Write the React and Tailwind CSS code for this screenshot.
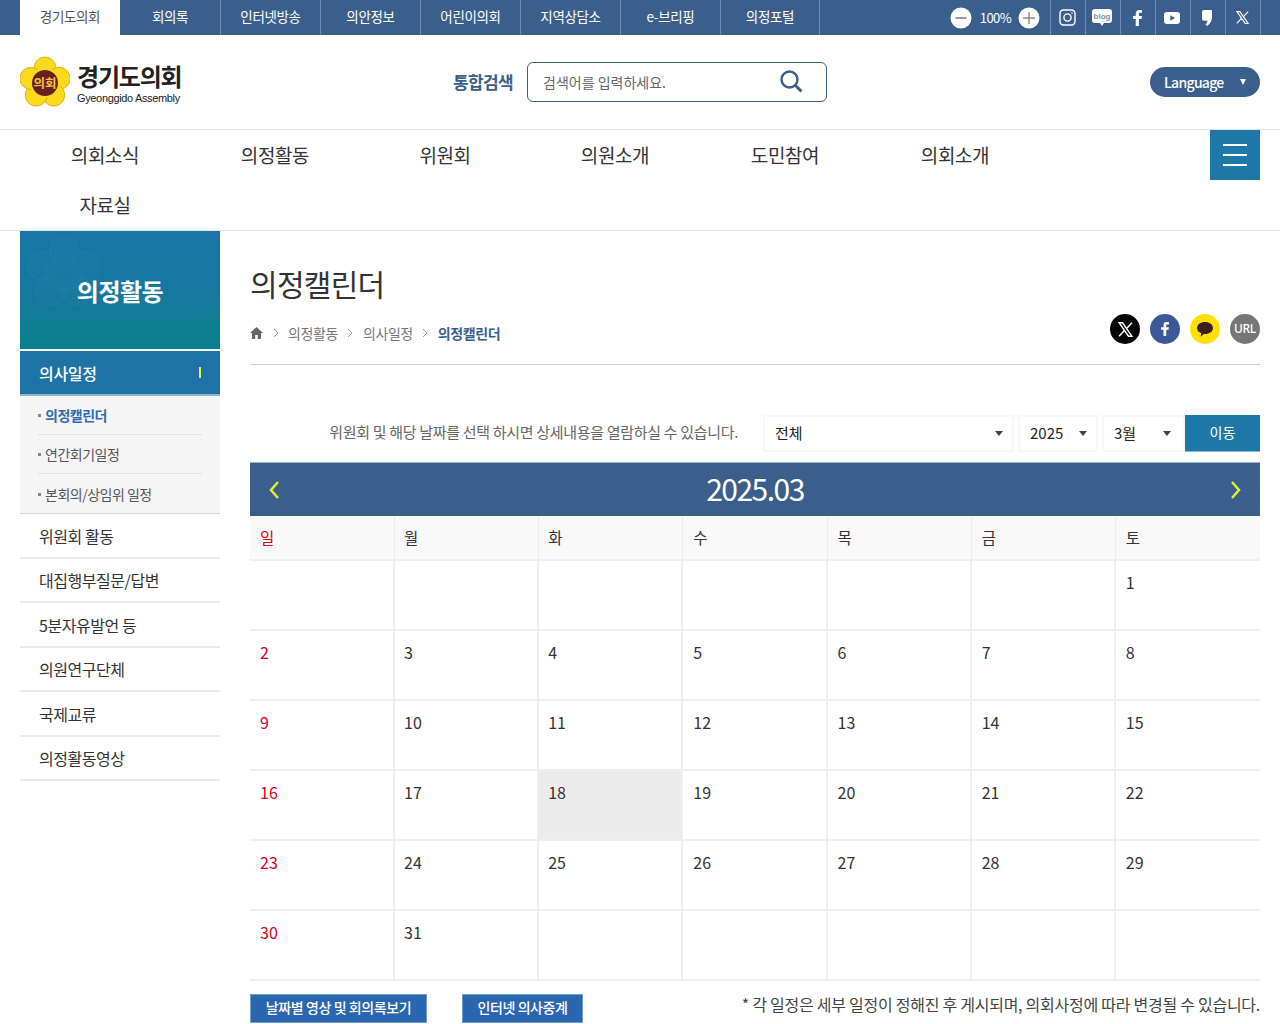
import React from "react";

const F = { fontFamily: '"Noto Sans CJK KR", "Noto Sans", sans-serif' };
const tabs = ["경기도의회","회의록","인터넷방송","의안정보","어린이의회","지역상담소","e-브리핑","의정포털"];
const nav = ["의회소식","의정활동","위원회","의원소개","도민참여","의회소개","자료실"];
const side = ["위원회 활동","대집행부질문/답변","5분자유발언 등","의원연구단체","국제교류","의정활동영상"];
const days = ["일","월","화","수","목","금","토"];
const cells = [null,null,null,null,null,null,1,...Array.from({length:30},(_,i)=>i+2),null,null,null,null,null];

function Flower({ className }) {
  const petals = [0,72,144,216,288];
  return (
    <svg viewBox="0 0 50 52" className={className}>
      {petals.map(a => <ellipse key={a} cx="25" cy="12" rx="11" ry="11" fill="#fbd91c" stroke="#d8a915" strokeWidth="0.8" transform={`rotate(${a} 25 27)`} />)}
      <circle cx="25" cy="27" r="15" fill="#fbd91c" />
      <circle cx="25" cy="27" r="13" fill="#6b1f1f" />
      <text x="25" y="32" textAnchor="middle" fontSize="12.5" fontWeight="700" fill="#f5c542" style={F}>의회</text>
    </svg>
  );
}

function TopIcon({ children }) {
  return <div className="w-[35px] h-[35px] flex items-center justify-center pr-[2px] border-r border-[#6d8cb3] text-white">{children}</div>;
}

function Select({ w, label, pr }) {
  return (
    <div className={`${w} ${pr} h-[37px] border-2 border-[#f7f7f7] flex items-center justify-between pl-[10px] text-[15px] text-[#222]`}>
      <span>{label}</span>
      <svg width="8" height="5" viewBox="0 0 8 5"><path d="M0 0h8L4 5z" fill="#444" /></svg>
    </div>
  );
}

export default function App() {
  return (
    <div className="w-[1280px] h-[1024px] overflow-hidden bg-white text-[#333]" style={F}>
      {/* top bar */}
      <div className="h-[35px] bg-[#3b5f8c] flex pl-[20px] pr-[19px] items-stretch">
        {tabs.map((t,i) => (
          <div key={t} className={`w-[100px] flex items-center justify-center text-[13.5px] tracking-[-0.35px] pb-[2px] ${i===0 ? "bg-white text-[#555]" : "text-white"} ${i>1 ? "border-l border-[#6d8cb3]" : ""} ${i===7 ? "border-r border-[#6d8cb3]" : ""}`}>{t}</div>
        ))}
        <div className="ml-auto flex items-center">
          <svg width="22" height="22" viewBox="0 0 22 22"><circle cx="11" cy="11" r="10.500" fill="#fff"/><path d="M5.500 11h11" stroke="#999" strokeWidth="2"/></svg>
          <span className="text-white text-[13px] tracking-[-0.6px] ml-[8px] mr-[7px]">100%</span>
          <svg width="22" height="22" viewBox="0 0 22 22" className="mr-[10px]"><circle cx="11" cy="11" r="10.500" fill="#fff"/><path d="M5 11h12M11 5v12" stroke="#888" strokeWidth="1.4"/></svg>
          <div className="w-px h-[35px] bg-[#6d8cb3]" />
          <TopIcon><svg width="17" height="17" viewBox="0 0 17 17" fill="none" stroke="#fff" strokeWidth="1.4"><rect x="1" y="1" width="15" height="15" rx="3.500"/><circle cx="8.500" cy="8.500" r="3.600"/><circle cx="13" cy="4" r="0.800" fill="#fff" stroke="none"/></svg></TopIcon>
          <TopIcon>
            <svg width="20" height="18" viewBox="0 0 20 18"><path d="M3 0h14a3 3 0 0 1 3 3v8a3 3 0 0 1-3 3h-5l-2 3-2-3H3a3 3 0 0 1-3-3V3a3 3 0 0 1 3-3z" fill="#fff"/><text x="10" y="9.800" textAnchor="middle" fontSize="8" fontWeight="700" fill="#7d8fa8" style={{fontFamily:'"Liberation Sans",sans-serif'}}>blog</text></svg>
          </TopIcon>
          <TopIcon><svg width="9" height="16" viewBox="0 0 10 18"><path d="M3 18V10H0V6.800h3V4.500C3 1.500 4.600 0 7.200 0H10v3.200H8c-1 0-1.400.5-1.400 1.400v2.200H10L9.500 10H6.600v8z" fill="#fff"/></svg></TopIcon>
          <TopIcon><svg width="16" height="12" viewBox="0 0 16 12"><rect width="16" height="12" rx="3" fill="#fff"/><path d="M6.300 3.300v5.400L11 6z" fill="#3b5f8c"/></svg></TopIcon>
          <TopIcon><svg width="10" height="16" viewBox="0 0 10 16"><path d="M2 0h7a1 1 0 0 1 1 1v6c0 4-2 7-5 9l-1.500-1.500c1.200-1.200 1.800-2.400 2-3.800H2.500A2.500 2.500 0 0 1 0 8.200V2a2 2 0 0 1 2-2z" fill="#fff"/></svg></TopIcon>
          <TopIcon><svg width="15" height="15" viewBox="0 0 24 24" fill="none" stroke="#fff" strokeWidth="1.800"><path d="M3 2.500h4.800L21 21.500h-4.800zM21 2.500l-8 8.800M3 21.500l8-8.800"/></svg></TopIcon>
        </div>
      </div>

      {/* header */}
      <div className="h-[95px] border-b border-[#e4e4e4] pl-[20px] pr-[20px] flex items-center">
        <div className="w-[433px] flex items-center shrink-0">
          <Flower className="w-[50px] h-[52px]" />
          <div className="ml-[7px] text-[#222] pt-[2px]">
            <div className="text-[24px] leading-[30px] font-bold tracking-[-1.2px]">경기도의회</div>
            <div className="text-[11px] leading-[13px] tracking-[-0.35px] mt-[1px]" style={{fontFamily:'"Liberation Sans",sans-serif'}}>Gyeonggido Assembly</div>
          </div>
        </div>
        <div className="text-[17px] font-bold text-[#3b5f8c] tracking-[-0.6px] w-[74px] shrink-0">통합검색</div>
        <div className="w-[300px] h-[40px] border border-[#3b5f8c] rounded-[6px] flex items-center justify-between pl-[15px] pr-[22px] -mt-[1px] shrink-0">
          <span className="text-[14px] text-[#666] pt-[2px]">검색어를 입력하세요.</span>
          <svg width="25" height="25" viewBox="0 0 25 25" fill="none" stroke="#3b5f8c"><circle cx="10.500" cy="10.500" r="8" strokeWidth="2.400"/><path d="M16.500 16.500l6 6" strokeWidth="3"/></svg>
        </div>
        <div className="ml-auto w-[110px] h-[30px] rounded-[15px] bg-[#3b5f8c] flex items-center pl-[14px] pr-[14px] justify-between text-white -mt-[1px]">
          <span className="text-[14px] font-medium tracking-[-0.7px] pt-[1px]">Language</span>
          <svg width="6" height="6" viewBox="0 0 7 7"><path d="M0 0h7L3.500 7z" fill="#fff"/></svg>
        </div>
      </div>

      {/* nav */}
      <div className="h-[101px] border-b border-[#e8e8e8] pl-[20px] pr-[20px] flex justify-between items-start">
        <div className="w-[1020px] flex flex-wrap">
          {nav.map((n,i) => <div key={i} className="w-[170px] h-[50px] flex items-center justify-center text-[19px] text-[#333] tracking-[-0.4px]">{n}</div>)}
        </div>
        <div className="w-[50px] h-[50px] bg-[#1d78a8] flex flex-col items-center justify-center gap-[8px]">
          <div className="w-[24px] h-[2px] bg-white" />
          <div className="w-[24px] h-[2px] bg-white" />
          <div className="w-[24px] h-[2px] bg-white" />
        </div>
      </div>

      <div className="flex pl-[20px] pr-[20px]">
        {/* sidebar */}
        <div className="w-[200px] shrink-0">
          <div className="relative h-[118px] flex items-center justify-center bg-gradient-to-b from-[#1a76a5] via-[#17789f] to-[#07818a] overflow-hidden">
            <svg viewBox="0 0 74 74" className="absolute left-[7px] top-[4px] w-[74px] h-[74px] opacity-[0.04]" fill="#fff" fillOpacity="0.35" stroke="#fff" strokeWidth="1">
              {[0,72,144,216,288].map(a => <circle key={a} cx="37" cy="15" r="14" transform={`rotate(${a} 37 38)`} />)}
              <circle cx="37" cy="38" r="18"/>
            </svg>
            <div className="relative text-white text-[24px] font-bold tracking-[-0.5px] pt-[1px]">의정활동</div>
          </div>
          <div className="mt-[2px] h-[45px] bg-[#1d73a6] border-b-[2px] border-[#8fb7cf] flex items-center justify-between pl-[19px] pr-[19px] text-white">
            <span className="text-[16px] font-medium tracking-[-0.3px]">의사일정</span>
            <div className="w-[2px] h-[11px] bg-[#f0ee3a]" />
          </div>
          <div className="bg-[#f5f5f6] border-b border-[#d8d8d8] h-[118px] pl-[18px] pr-[18px]">
            {[["의정캘린더",true],["연간회기일정",false],["본회의/상임위 일정",false]].map(([t,a],i) => (
              <div key={t} className={`h-[39px] flex items-center text-[14px] tracking-[-0.5px] ${i<2 ? "border-b border-[#e2e2e2]" : "pt-[1px]"} ${a ? "text-[#2f6bb2] font-bold" : "text-[#555]"}`}>
                <span className="w-[3px] h-[3px] bg-[#888] mr-[4px]" />{t}
              </div>
            ))}
          </div>
          {side.map(s => (
            <div key={s} className="h-[44.5px] border-b-[2px] border-[#eaeaea] flex items-center pl-[19px] pt-[1px] text-[16px] text-[#333] tracking-[-0.45px]">{s}</div>
          ))}
        </div>

        {/* main */}
        <div className="ml-[30px] flex-1 min-w-0">
          <h1 className="text-[30px] leading-[40px] mt-[32px] text-[#333] tracking-[-0.7px]">의정캘린더</h1>
          <div className="h-[62px] border-b border-[#cfcfcf] flex justify-between">
            <div className="flex items-center h-[52px] pt-[8px] text-[14px] text-[#777] tracking-[-0.4px]">
              <svg width="13" height="12" viewBox="0 0 13 12"><path d="M6.500 0L0 6h2v6h3.200V8h2.600v4H11V6h2z" fill="#666"/></svg>
              <Sep />
              <span>의정활동</span><Sep />
              <span>의사일정</span><Sep />
              <span className="text-[#3b5f8c] font-bold">의정캘린더</span>
            </div>
            <div className="flex gap-[10px] h-[52px] items-center">
              <Circle c="bg-black"><svg width="17" height="17" viewBox="0 0 24 24" fill="none" stroke="#fff" strokeWidth="2"><path d="M3 2.500h4.800L21 21.500h-4.800zM21 2.500l-8 8.800M3 21.500l8-8.800"/></svg></Circle>
              <Circle c="bg-[#3b5998]"><svg width="8" height="14" viewBox="0 0 10 18"><path d="M3 18V10H0V6.800h3V4.500C3 1.500 4.600 0 7.200 0H10v3.200H8c-1 0-1.400.5-1.400 1.400v2.200H10L9.500 10H6.600v8z" fill="#fff"/></svg></Circle>
              <Circle c="bg-[#ffe000]"><svg width="16" height="15" viewBox="0 0 16 15"><path d="M8 0c4.400 0 8 2.600 8 6s-3.600 6-8 6h-1L3.500 14.800l.7-3.500C1.700 10.300 0 8.300 0 6c0-3.400 3.600-6 8-6z" fill="#3c1e1e"/></svg></Circle>
              <Circle c="bg-[#767676]"><span className="text-white text-[12px] font-medium tracking-[-0.3px]" style={{fontFamily:'"Noto Sans",sans-serif'}}>URL</span></Circle>
            </div>
          </div>

          {/* filter */}
          <div className="mt-[50px] flex items-center h-[37px]">
            <div className="ml-auto text-[15px] text-[#666] tracking-[-0.32px] mr-[25px] pb-[3px]">위원회 및 해당 날짜를 선택 하시면 상세내용을 열람하실 수 있습니다.</div>
            <Select w="w-[251px]" pr="pr-[9px]" label="전체" />
            <div className="w-[4px]" />
            <Select w="w-[80px]" pr="pr-[9px]" label="2025" />
            <div className="w-[4px]" />
            <Select w="w-[83px]" pr="pr-[12px]" label="3월" />
            <div className="w-[75px] h-[37px] bg-[#1d78a8] text-white text-[14px] flex items-center justify-center border-b border-[#8fb7cf] pb-[2px]">이동</div>
          </div>

          {/* calendar head */}
          <div className="mt-[10px] h-[54px] bg-[#3b5f8c] border-t border-[#9db4cf] flex items-center justify-between pl-[19px] pr-[19px]">
            <Chevron d="M9 1L2 9l7 8" />
            <div className="text-[30px] text-white tracking-[-1.5px] pb-[2px]">2025.03</div>
            <Chevron d="M2 1l7 8-7 8" />
          </div>

          <div className="grid grid-cols-[145px_repeat(6,minmax(0,1fr))]">
            {days.map((d,i) => (
              <div key={d} className={`h-[45px] bg-[#f9f9f9] border-b-2 border-[#efefef] flex items-center text-[15.5px] pt-[1px] ${i===1 || i===2 ? "pl-[9px]" : "pl-[10px]"} ${i<6 ? "border-r border-r-[#ececec]" : ""} ${i===0 ? "text-[#d9001b]" : "text-[#333]"}`}>{d}</div>
            ))}
            {cells.map((n,i) => (
              <div key={i} className={`h-[70px] border-b-2 border-[#efefef] pt-[9px] text-[16px] leading-[24px] ${i%7===1 || i%7===2 ? "pl-[9px]" : "pl-[10px]"} ${i%7<6 ? "border-r-2 border-r-[#efefef]" : ""} ${n===18 ? "bg-[#ececec]" : ""} ${i%7===0 ? "text-[#d9001b]" : "text-[#333]"}`}>{n}</div>
            ))}
          </div>

          {/* footer */}
          <div className="mt-[13px] flex items-start">
            <div className="w-[177px] h-[29px] bg-[#2b66b1] border border-[#6f9bd4] text-white text-[14px] font-medium tracking-[-0.4px] flex items-center justify-center pb-[2px]">날짜별 영상 및 회의록보기</div>
            <div className="ml-[35px] w-[121px] h-[29px] bg-[#2b66b1] border border-[#6f9bd4] text-white text-[14px] font-medium tracking-[-0.4px] flex items-center justify-center pb-[2px]">인터넷 의사중계</div>
            <div className="ml-auto text-[16px] leading-[20px] text-[#444] tracking-[-0.26px]">* 각 일정은 세부 일정이 정해진 후 게시되며, 의회사정에 따라 변경될 수 있습니다.</div>
          </div>
        </div>
      </div>
    </div>
  );
}

function Sep() {
  return <svg width="6" height="10" viewBox="0 0 6 10" className="mx-[9.5px]" fill="none" stroke="#999"><path d="M1 1l4 4-4 4"/></svg>;
}
function Circle({ c, children }) {
  return <div className={`w-[30px] h-[30px] rounded-full flex items-center justify-center ${c}`}>{children}</div>;
}
function Chevron({ d }) {
  return <svg width="11" height="18" viewBox="0 0 11 18" fill="none" stroke="#e5ec2e" strokeWidth="2.500"><path d={d}/></svg>;
}
